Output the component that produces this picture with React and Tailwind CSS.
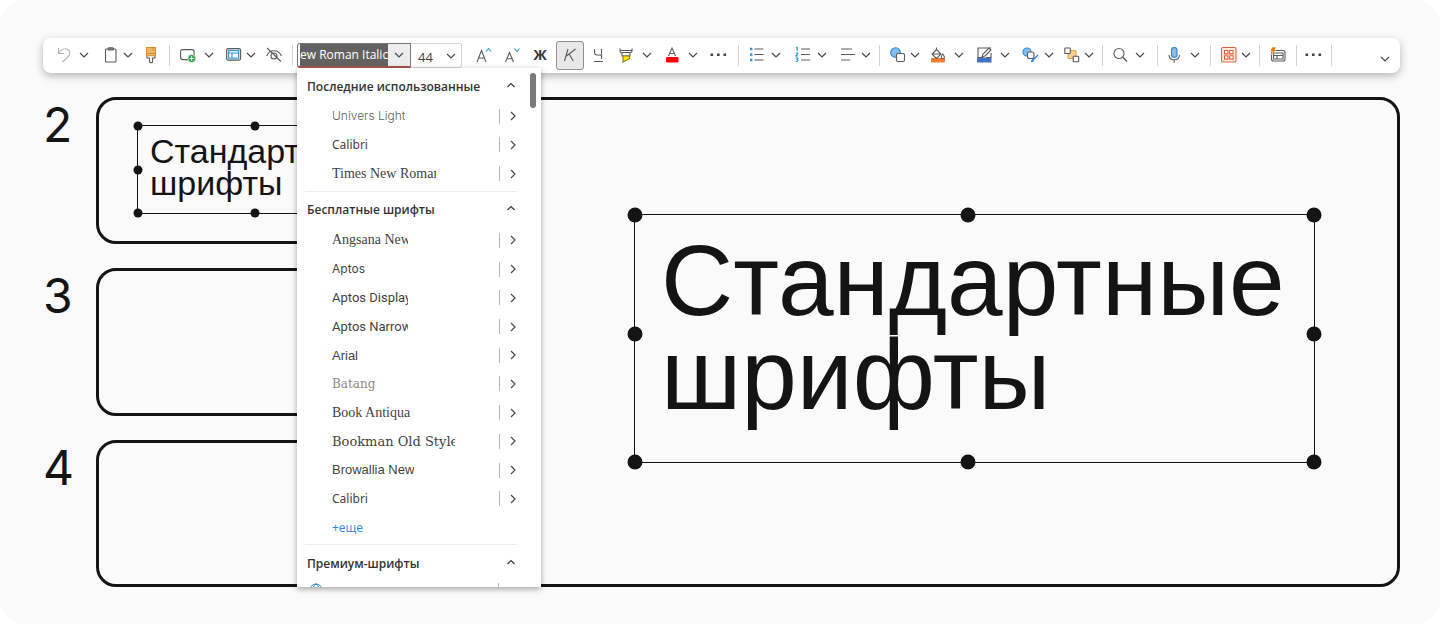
import React, { useState } from 'react';
import clsx from 'clsx';

const Icon = ({ children }) => (
    <svg viewBox="0 0 20 20" className="h-5 w-5" fill="none" stroke="#5a5a5a" strokeWidth="1.1" aria-hidden="true">
        {children}
    </svg>
);

const ChevronIcon = () => (
    <svg viewBox="0 0 10 10" className="h-2.5 w-2.5" fill="none" stroke="#484848" strokeWidth="1.2" aria-hidden="true">
        <path d="M1 3l4 4 4-4" />
    </svg>
);

const Tool = ({ label, className, children }) => (
    <button type="button" aria-label={label} className={clsx('flex h-[21px] w-5 shrink-0 items-start justify-center', className)}>
        {children}
    </button>
);

const Chevron = ({ label, className }) => (
    <button type="button" aria-label={label} className={clsx('flex h-[21px] w-2.5 shrink-0 items-start justify-center pt-[5px]', className)}>
        <ChevronIcon />
    </button>
);

const Divider = ({ className }) => <span className={clsx('h-[21px] w-px shrink-0 bg-[#d2d2d2]', className)} />;

const recentFonts = [
    { name: 'Univers Light', style: "font-['Inter'] font-light text-xs text-[#5f5f5f]" },
    { name: 'Calibri', style: "font-['Noto_Sans'] text-xs" },
    { name: 'Times New Roman', style: "w-[104px] font-['Liberation_Serif'] text-sm" },
];

const freeFonts = [
    { name: 'Angsana New', style: "w-[76px] font-['Liberation_Serif'] text-sm" },
    { name: 'Aptos', style: "font-['Inter'] text-xs" },
    { name: 'Aptos Display', style: "w-[76px] font-['Roboto'] text-[13px]" },
    { name: 'Aptos Narrow', style: "w-[76px] font-['Roboto'] text-[13px]" },
    { name: 'Arial', style: "font-['Liberation_Sans'] text-[13px]" },
    { name: 'Batang', style: "font-['DejaVu_Serif'] font-light text-xs text-[#8a8a8a]" },
    { name: 'Book Antiqua', style: "w-20 font-['Liberation_Serif'] text-sm" },
    { name: 'Bookman Old Style', style: "w-[123px] font-['DejaVu_Serif'] text-[13px]" },
    { name: 'Browallia New', style: "w-[82px] font-['Liberation_Sans'] text-[13px]" },
    { name: 'Calibri', style: "font-['Noto_Sans'] text-xs" },
];

const SectionHeader = ({ title, className }) => (
    <button type="button" className={clsx('flex w-full items-center justify-between pr-[25px] pl-2.5 text-left text-xs font-semibold text-[#333]', className)}>
        {title}
        <svg viewBox="0 0 10 10" className="mb-1 h-2.5 w-2.5" fill="none" stroke="#333" strokeWidth="1.2" aria-hidden="true">
            <path d="M1.500 7L5 3.500 8.500 7" />
        </svg>
    </button>
);

const FontRow = ({ font }) => (
    <li className="flex items-center justify-between pr-[23px] pl-[35px]">
        <button type="button" className={clsx('overflow-hidden text-left whitespace-nowrap', font.style)}>
            {font.name}
        </button>
        <button type="button" aria-label={`Варианты ${font.name}`} className="flex items-center gap-2">
            <span className="h-[15px] w-px bg-[#b5b5b5]" />
            <svg viewBox="0 0 10 10" className="h-2.5 w-2.5" fill="none" stroke="#484848" strokeWidth="1.2" aria-hidden="true">
                <path d="M3 1l4 4-4 4" />
            </svg>
        </button>
    </li>
);

const FontMenu = () => (
    <div className="absolute top-full left-0 z-10 max-h-[519px] w-[244px] overflow-hidden bg-white text-[#3f3f3f] shadow-[0_2px_6px_rgba(0,0,0,0.35)]">
        <span className="absolute top-[5px] right-[5px] h-[35px] w-1.5 rounded-full bg-[#7a7a7a]" />
        <SectionHeader title="Последние использованные" className="h-[34px] pt-1" />
        <ul className="grid h-[86px] auto-rows-fr">
            {recentFonts.map((font) => (
                <FontRow key={font.name} font={font} />
            ))}
        </ul>
        <hr className="mt-[3px] mr-6 ml-2 border-[#ececec]" />
        <SectionHeader title="Бесплатные шрифты" className="h-[34px] pt-0.5" />
        <ul className="grid h-[316px] auto-rows-fr">
            {freeFonts.map((font) => (
                <FontRow key={font.name} font={font} />
            ))}
            <li className="flex items-center pl-[35px]">
                <a href="#more" className="text-xs text-[#2b88d8]">+еще</a>
            </li>
        </ul>
        <hr className="mt-0.5 mr-6 ml-2 border-[#ececec]" />
        <SectionHeader title="Премиум-шрифты" className="h-[38px]" />
        <div className="flex justify-between pr-[42px] pl-3">
            <svg viewBox="0 0 14 14" className="h-3.5 w-3.5" fill="none" stroke="#2b88d8" strokeWidth="1" aria-hidden="true">
                <circle cx="7" cy="7" r="6" />
                <ellipse cx="7" cy="7" rx="2.800" ry="6" />
                <path d="M1.500 4.500h11M1.500 9.500h11" />
            </svg>
            <span className="h-[15px] w-px bg-[#b5b5b5]" />
        </div>
    </div>
);

const FontPicker = () => {
    const [font, setFont] = useState('ew Roman Italic');
    const [size, setSize] = useState('44');

    return (
        <div className="relative ml-1 flex h-[25px] shrink-0">
            <div className="flex w-[114px] rounded-l-[3px] border border-b-2 border-[#777] border-b-[#a8564c] bg-white pl-0.5">
                <input
                    type="text"
                    aria-label="Шрифт"
                    value={font}
                    onChange={(e) => setFont(e.target.value)}
                    className="w-[88px] bg-[#636260] text-xs text-white outline-none"
                />
                <button type="button" aria-label="Список шрифтов" className="flex flex-1 items-center justify-center bg-[#ececec]">
                    <ChevronIcon />
                </button>
            </div>
            <div className="relative w-[51px] rounded-r-[3px] border border-l-0 border-[#d2d2d2]">
                <select
                    aria-label="Размер шрифта"
                    value={size}
                    onChange={(e) => setSize(e.target.value)}
                    className="h-full w-full appearance-none pb-0.5 pl-[7px] text-[13px] text-[#3f3f3f] outline-none"
                >
                    <option>40</option>
                    <option>44</option>
                    <option>48</option>
                </select>
                <span className="pointer-events-none absolute inset-y-0 right-[5px] flex items-center">
                    <ChevronIcon />
                </span>
            </div>
            <FontMenu />
        </div>
    );
};

const Toolbar = () => (
    <header className="flex h-[35px] items-center rounded-lg bg-white pr-2.5 pl-3 shadow-[0_3px_8px_rgba(0,0,0,0.28)]">
        <Tool label="Отменить">
            <Icon>
                <path stroke="#b4b4b4" d="M3.500 3v5.500H9M3.800 8.300C6 4.500 9.500 3 12.300 4.300c3 1.500 3.300 5 1 7.200L7.500 17" />
            </Icon>
        </Tool>
        <Chevron label="Журнал отмены" className="ml-1" />
        <Tool label="Вставить" className="ml-3">
            <Icon>
                <rect x="4.500" y="4" width="10.500" height="13" rx="1" />
                <rect x="7" y="2.700" width="5.500" height="2.300" rx="1" fill="#8a8a8a" />
            </Icon>
        </Tool>
        <Chevron label="Параметры вставки" className="ml-0.5" />
        <Tool label="Формат по образцу" className="ml-2">
            <Icon>
                <path d="M6 11v2h2.500v4q1.500 1.500 3 0v-4H14v-2" fill="#fff" />
                <path d="M5.500 2.500h9v8.300h-9z" fill="#f8b45e" stroke="#e08a2c" />
                <path d="M12 3v2.500M6 8.500h8" stroke="#e08a2c" />
            </Icon>
        </Tool>
        <Divider className="ml-2" />
        <Tool label="Создать слайд" className="ml-2">
            <Icon>
                <rect x="2.600" y="4.600" width="13.500" height="10" rx="2" />
                <circle cx="13.700" cy="13.500" r="4" fill="#2fa24b" stroke="#fff" strokeWidth="0.600" />
                <path d="M13.700 11.300v4.400M11.500 13.500h4.400" stroke="#fff" />
            </Icon>
        </Tool>
        <Chevron label="Варианты слайда" className="ml-1.5" />
        <Tool label="Макет" className="ml-2.5">
            <Icon>
                <rect x="2.600" y="3.600" width="14" height="11.500" rx="1.500" fill="#dceefa" />
                <rect x="4.600" y="5.600" width="10" height="7.500" fill="#fff" stroke="#2b95d6" />
                <path d="M4.600 8h10M8 8v5" stroke="#2b95d6" />
            </Icon>
        </Tool>
        <Chevron label="Варианты макета" className="ml-0.5" />
        <Tool label="Скрыть слайд" className="ml-2">
            <Icon>
                <path d="M3 3l14 13.500M2.800 11C4 7.500 7 5.700 10 5.700s6 1.800 7.400 5.300" />
                <circle cx="10" cy="11" r="3" />
            </Icon>
        </Tool>
        <Divider className="ml-2" />
        <FontPicker />
        <Tool label="Увеличить размер" className="ml-3">
            <Icon>
                <path d="M3 17L7.500 5.500 12 17M4.500 13h6" />
                <path d="M12 6.500l2.500-3 2.500 3" stroke="#2b95d6" />
            </Icon>
        </Tool>
        <Tool label="Уменьшить размер" className="ml-2">
            <Icon>
                <path d="M3.500 17l4-9.500 4 9.500M5 13.800h5" />
                <path d="M12.500 3.500l2.500 3 2.500-3" stroke="#2b95d6" />
            </Icon>
        </Tool>
        <Tool label="Полужирный" className="ml-2 text-sm leading-5 font-bold text-[#333]">Ж</Tool>
        <button type="button" aria-label="Курсив" aria-pressed="true" className="ml-1.5 flex h-[29px] w-7 shrink-0 items-start justify-center rounded-[3px] border border-[#8f8f8f] bg-[#e8e8e8] pt-[3px]">
            <Icon>
                <path d="M8 4L4.500 16M15.500 4L6.500 11M9.200 9l4 7" />
            </Icon>
        </button>
        <Tool label="Подчеркнутый" className="ml-1">
            <Icon>
                <path d="M6.500 4v3.500q0 2.500 2.500 2.500h4.500M13.500 4v10M6 16.500h9" />
            </Icon>
        </Tool>
        <Tool label="Цвет выделения" className="ml-2">
            <Icon>
                <path d="M4 3.500V6q0 1.500 1.500 1.500h9Q16 7.500 16 6V3.500M4.500 5.500h11" />
                <path d="M6 7.500h8V11H6z" fill="#fff" />
                <path d="M7 11h6.500v2.500L7 17z" fill="#ffe800" stroke="#8a7d00" />
            </Icon>
        </Tool>
        <Chevron label="Цвета выделения" className="ml-1.5" />
        <Tool label="Цвет шрифта" className="ml-2.5">
            <Icon>
                <path d="M6.500 11L10 3l3.500 8M7.700 8.500h4.600" />
                <rect x="4" y="12" width="12.500" height="5.500" rx="1" fill="#ff0000" stroke="none" />
            </Icon>
        </Tool>
        <Chevron label="Цвета шрифта" className="ml-1.5" />
        <Tool label="Другие параметры шрифта" className="ml-2.5">
            <Icon>
                <path d="M2.500 8.500h2.600v2.600H2.500zM9 8.500h2.600v2.600H9zM15.500 8.500h2.600v2.600h-2.600z" fill="#444" stroke="none" />
            </Icon>
        </Tool>
        <Divider className="ml-2.5" />
        <Tool label="Маркеры" className="ml-2">
            <Icon>
                <path d="M7.500 4h9M7.500 9.500h9M7.500 15h9" />
                <path d="M3 2.800h2.400v2.400H3zM3 8.300h2.400v2.400H3zM3 13.800h2.400v2.400H3z" fill="#2b95d6" stroke="none" />
            </Icon>
        </Tool>
        <Chevron label="Виды маркеров" className="ml-1" />
        <Tool label="Нумерация" className="ml-3">
            <Icon>
                <path d="M8 4h9M8 9.500h9M8 15h9" />
                <path d="M3 3l1.200-.7V6M2.800 8.200q2-1 2 .3L2.800 11H5M2.800 13q2.200-.5 2 .8-.5.800-1.200.7 1.500 0 1.500 1t-2.300 1" stroke="#2b95d6" />
            </Icon>
        </Tool>
        <Chevron label="Виды нумерации" className="ml-1" />
        <Tool label="Выравнивание" className="ml-2.5">
            <Icon>
                <path d="M4 4h11M4 9.500h14M4 15h9" />
            </Icon>
        </Tool>
        <Chevron label="Варианты выравнивания" className="ml-1" />
        <Divider className="ml-2" />
        <Tool label="Фигуры" className="ml-2">
            <Icon>
                <circle cx="7.500" cy="7.500" r="4.800" fill="#83beec" stroke="#2b88d8" />
                <rect x="8.500" y="8.500" width="8" height="8" rx="1.500" fill="#fff" />
            </Icon>
        </Tool>
        <Chevron label="Все фигуры" className="ml-0.5" />
        <Tool label="Заливка" className="ml-2">
            <Icon>
                <rect x="3" y="13" width="14" height="4.500" rx="1" fill="#f07c2e" stroke="none" />
                <path d="M8.500 2.500v3M8.500 4.500l4.500 4.500-4.500 4.500L4 9zM4.500 9h8" fill="#fff" />
                <path d="M14.800 9q3.200 4.500 0 4.800-3.200-.3 0-4.800z" fill="#fff" />
            </Icon>
        </Tool>
        <Chevron label="Цвета заливки" className="ml-1.5" />
        <Tool label="Контур" className="ml-2.5">
            <Icon>
                <rect x="3" y="12.500" width="14.500" height="5" fill="#4472c4" stroke="none" />
                <path d="M17 3H4v9.500h5M17 8v4.500h-5" />
                <path d="M8 12l1-3 6-6 2 2-6 6z" fill="#fff" />
            </Icon>
        </Tool>
        <Chevron label="Цвета контура" className="ml-1.5" />
        <Tool label="Экспресс-стили" className="ml-2.5">
            <Icon>
                <circle cx="7" cy="7" r="4" fill="#83beec" stroke="#2b88d8" />
                <rect x="7.500" y="7" width="6.500" height="6.500" rx="2" fill="#fff" />
                <path d="M18 10l-5 5" stroke="#2b88d8" strokeWidth="1.500" />
                <path d="M13.500 14q-1.500-.5-2 1l-.8 2q3 .5 3.300-1.500z" fill="#2b88d8" stroke="none" />
            </Icon>
        </Tool>
        <Chevron label="Все стили" className="ml-1" />
        <Tool label="Упорядочить" className="ml-2">
            <Icon>
                <rect x="6" y="5.500" width="8" height="8" rx="1" fill="#fbd08e" stroke="#ee9c3d" />
                <rect x="2.800" y="3" width="5.500" height="5.500" rx="0.500" fill="#fff" />
                <rect x="11.200" y="11.200" width="5.500" height="5.500" rx="0.500" fill="#fff" />
            </Icon>
        </Tool>
        <Chevron label="Порядок объектов" className="ml-0.5" />
        <Divider className="ml-2" />
        <Tool label="Найти" className="ml-2">
            <Icon>
                <circle cx="8" cy="8.500" r="5" />
                <path d="M11.800 12.300L16 16.500" strokeWidth="1.400" />
            </Icon>
        </Tool>
        <Chevron label="Параметры поиска" className="ml-1" />
        <Divider className="ml-3" />
        <Tool label="Диктовать" className="ml-1.5">
            <Icon>
                <rect x="7.500" y="2.500" width="5.500" height="10" rx="2.700" fill="#83beec" stroke="#2b88d8" />
                <path d="M5 10q0 4.700 5.200 4.700t5.300-4.700M10.200 14.700v3" />
            </Icon>
        </Tool>
        <Chevron label="Параметры диктовки" className="ml-1.5" />
        <Divider className="ml-2.5" />
        <Tool label="Надстройки" className="ml-2">
            <Icon>
                <g stroke="#e0623b">
                    <rect x="2.500" y="2.500" width="14.500" height="14.500" rx="1.500" fill="#fdebe4" />
                    <path d="M5.500 5.500h3.400v3.400H5.500zM10.700 5.500h3.400v3.400h-3.400zM5.500 10.700h3.400v3.400H5.500zM10.700 10.700h3.400v3.400h-3.400z" fill="#fff" />
                </g>
            </Icon>
        </Tool>
        <Chevron label="Все надстройки" className="ml-0.5" />
        <Divider className="ml-2" />
        <Tool label="Конструктор" className="ml-2">
            <Icon>
                <rect x="3.500" y="5.500" width="13.500" height="10.500" rx="2" />
                <path d="M5.500 8h9.500v6H5.500zM5.500 10.500H15M9 10.500V14" />
                <path d="M4 2h4L7 4.500h1.500L3.500 10l.8-3.500H2z" fill="#e8811a" stroke="#fff" strokeWidth="0.500" />
            </Icon>
        </Tool>
        <Divider className="ml-2" />
        <Tool label="Еще" className="ml-1.5">
            <Icon>
                <path d="M2.500 8.500h2.600v2.600H2.500zM9 8.500h2.600v2.600H9zM15.500 8.500h2.600v2.600h-2.600z" fill="#444" stroke="none" />
            </Icon>
        </Tool>
        <Divider className="ml-2" />
        <Chevron label="Свернуть ленту" className="mt-2 ml-auto" />
    </header>
);

const TextFrame = ({ className, handle, midX, midY }) => {
    const handlePositions = [
        'left-0 top-0',
        clsx(midX, 'top-0'),
        'left-full top-0',
        clsx('left-0', midY),
        clsx('left-full', midY),
        'left-0 top-full',
        clsx(midX, 'top-full'),
        'left-full top-full',
    ];

    return (
        <div className={clsx('relative border border-[#141414] text-[#141414]', className)}>
            <p className="font-['Liberation_Sans',sans-serif]">
                Стандартные
                <br />
                шрифты
            </p>
            {handlePositions.map((position) => (
                <span key={position} className={clsx('absolute -translate-1/2 rounded-full bg-[#141414]', handle, position)} />
            ))}
        </div>
    );
};

const Thumbnail = ({ number, children }) => (
    <li className="flex flex-1 gap-6">
        <span className="w-[29px] text-center font-['Inter'] text-5xl leading-[56px] text-[#141414]">{number}</span>
        <div className="flex w-[318px] items-start rounded-[20px] border-3 border-[#141414] pt-[25px] pl-[38px]">
            {children}
        </div>
    </li>
);

const App = () => {
    return (
        <div className="bg-white">
            <div className="flex min-h-screen flex-col rounded-3xl bg-[#fafafa] pt-[38px] pr-10 pb-[37px] pl-[43px] font-['Open_Sans','Noto_Sans',sans-serif]">
                <Toolbar />
                <main className="mt-6 flex flex-1 gap-6">
                    <ol className="flex shrink-0 flex-col gap-6">
                        <Thumbnail number="2">
                            <TextFrame
                                className="w-[235px] px-3 pt-[9px] pb-3.5 text-[34px] leading-8"
                                handle="h-[9px] w-[9px]"
                                midX="left-1/2"
                                midY="top-1/2"
                            />
                        </Thumbnail>
                        <Thumbnail number="3" />
                        <Thumbnail number="4" />
                    </ol>
                    <section className="flex flex-1 items-start justify-end rounded-[20px] border-3 border-[#141414] pt-[114px] pr-[82px]">
                        <TextFrame
                            className="w-[681px] pt-[18px] pb-[41px] pl-[26px] text-[100px] leading-[94px]"
                            handle="h-[15px] w-[15px]"
                            midX="left-[49%]"
                            midY="top-[48%]"
                        />
                    </section>
                </main>
            </div>
        </div>
    );
};

export default App;
